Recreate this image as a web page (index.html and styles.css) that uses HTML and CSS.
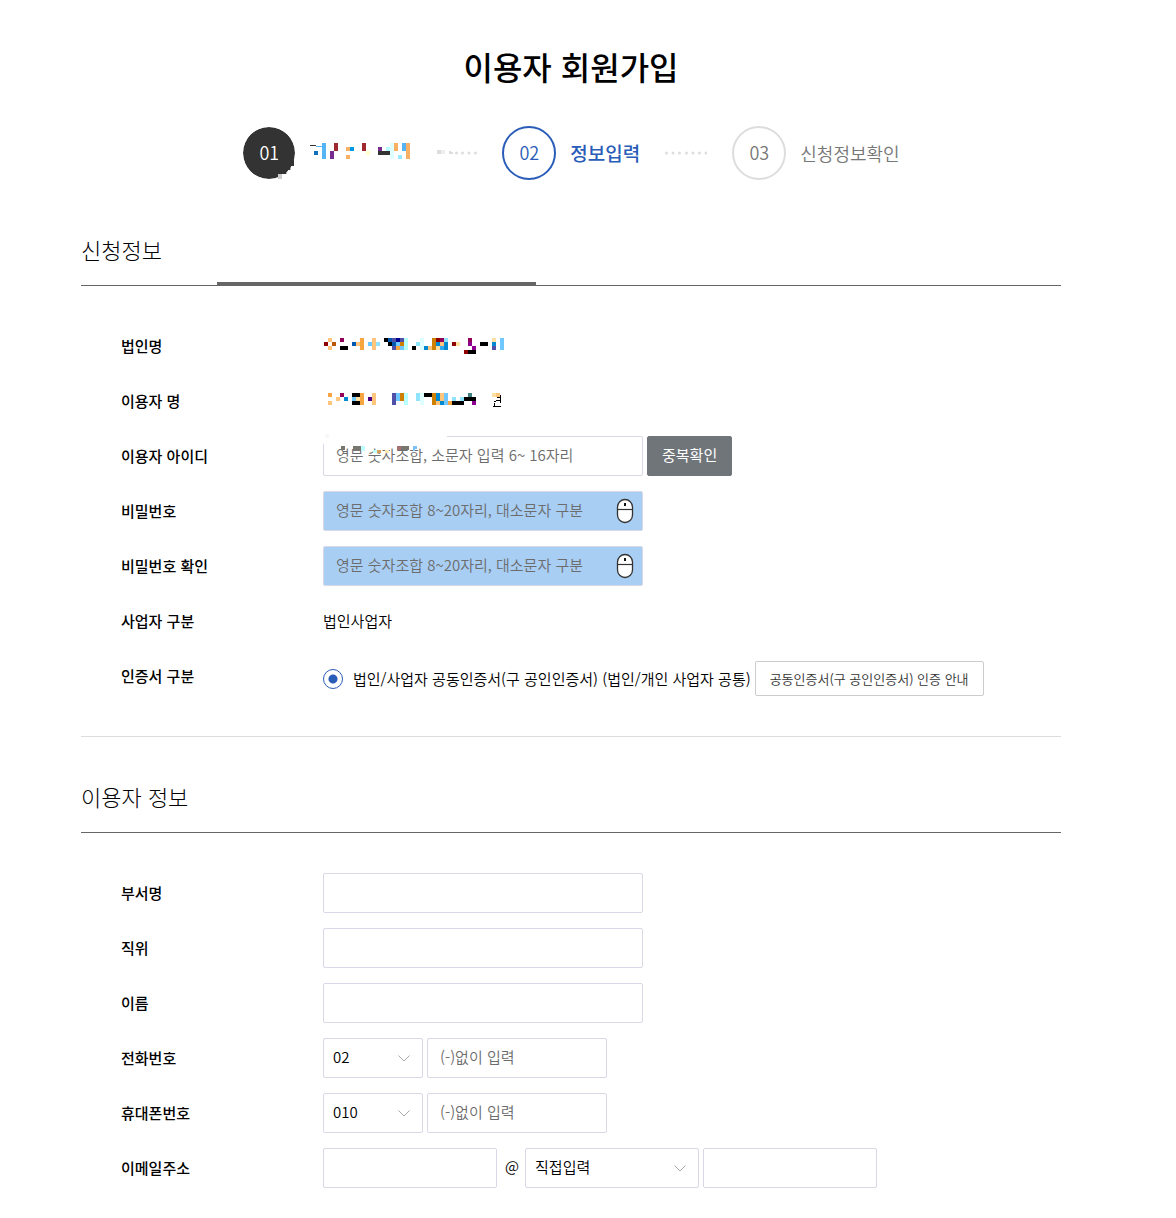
FILE: index.html
```html
<!DOCTYPE html>
<html lang="ko">
<head>
    <meta charset="UTF-8">
    <title>이용자 회원가입</title>
    <link rel="stylesheet" href="styles.css">
</head>
<body>
    <div class="wrap">
        <h1>이용자 회원가입</h1>
        <ol class="steps">
            <li class="step done">
                <span class="num">01</span>
                <!-- 가려진 단계명 -->
                <svg class="mask" width="100" height="20" viewBox="-1 0 25 5" shape-rendering="crispEdges" aria-hidden="true">
                    <path stroke="#333" d="M16 2.5h3"/>
                    <path stroke="#333" stroke-width=".25" d="M-1 .6h1.5"/>
                    <path stroke="#54b4f4" d="M2.5 0v4M22.5 0v2"/>
                    <path stroke="#54b4f4" stroke-width=".25" d="M.5 .8h1.5"/>
                    <path stroke="#a02830" d="M5.5 0v2M12.5 0v2"/>
                    <path stroke="#782c90" d="M4.5 2v2M16 1.5h1"/>
                    <path stroke="#f8b064" d="M20.5 0v2M23.5 0v4M8 1.5h1M8 3.5h1"/>
                    <path stroke="#0098e0" d="M9 1.5h1"/>
                    <path stroke="#1070b8" d="M0 2.5h1"/>
                    <path stroke="#b8ffff" d="M18 1.5h1"/>
                    <path stroke="#e0ffff" d="M19.5 0v4"/>
                    <path stroke="#98e8ff" d="M21 3.5h1"/>
                    <path stroke="#ffffc8" d="M13 2.5h1"/>
                </svg>
            </li>
            <li class="dots" aria-hidden="true">
                <svg width="42" height="8" viewBox="0 0 42 8">
                    <path fill="#ddd" d="M2 1h4v4H2z"/>
                    <path fill="#eee" d="M6 1h4v4H6z"/>
                    <path fill="#ddd" d="M14 2h2v1h2v2h-4z"/>
                    <g fill="#ddd"><circle cx="21.500" cy="4" r="1.500"/><circle cx="27.500" cy="4" r="1.500"/><circle cx="34" cy="4" r="1.500"/><circle cx="40.500" cy="4" r="1.500"/></g>
                </svg>
            </li>
            <li class="step on">
                <span class="num">02</span>
                <strong>정보입력</strong>
            </li>
            <li class="dots" aria-hidden="true">
                <svg width="42" height="8" viewBox="0 0 42 8">
                    <g fill="#ddd"><circle cx="1.500" cy="4" r="1.500"/><circle cx="8" cy="4" r="1.500"/><circle cx="14.500" cy="4" r="1.500"/><circle cx="21.500" cy="4" r="1.500"/><circle cx="28" cy="4" r="1.500"/><circle cx="34.500" cy="4" r="1.500"/><circle cx="41" cy="4" r="1.500"/></g>
                </svg>
            </li>
            <li class="step">
                <span class="num">03</span>
                <span>신청정보확인</span>
            </li>
        </ol>

        <form>
            <section>
                <h2 class="marked">신청정보</h2>
                <div class="rows">
                    <div class="row">
                        <span class="label">법인명</span>
                        <div class="field">
                            <svg class="mask" width="184" height="16" viewBox="0 0 46 4" shape-rendering="crispEdges" aria-hidden="true">
                                <path stroke="#000" d="M4 2.5h2M15 .5h1M16 1.5h1M22 2.5h1M36 3.5h2M39 1.5h2"/>
                                <path stroke="#900000" d="M0 1.5h1M28 .5h1M32 1.5h1M35 3.5h1"/>
                                <path stroke="#900058" d="M4 .5h1M29 .5h1M36 .5h1"/>
                                <path stroke="#900090" d="M36 1.5h1M37 2.5h1"/>
                                <path stroke="#b85808" d="M2 1.5h1"/>
                                <path stroke="#ffc57c" d="M1 .5h1M1 2.5h1M8 1.5h1M12.500 0v3M29 1.5h1M26 2.5h1"/>
                                <path stroke="#f7a540" d="M9.500 0v3M18 2.5h1"/>
                                <path stroke="#ffe0a0" d="M42 .5h1M33 1.5h1M28 2.5h1"/>
                                <path stroke="#d08000" d="M27.500 0v3M19 1.5h1"/>
                                <path stroke="#0058b0" d="M7 1.5h1M16 .5h1M17 1.5h1"/>
                                <path stroke="#000090" d="M18 .5h1"/>
                                <path stroke="#5050a8" d="M17 .5h1M19 .5h1M17 2.5h1M42 2.5h1"/>
                                <path stroke="#0088d0" d="M28 1.5h1M30 1.5h1M25 2.5h1M30 2.5h1M42 1.5h1"/>
                                <path stroke="#30a8f0" d="M29 2.5h1"/>
                                <path stroke="#70c8ff" d="M11 1.5h1M18 1.5h1M19 2.5h1M44.500 0v3"/>
                                <path stroke="#90e4ff" d="M13 1.5h1M23 1.5h1M30 .5h1"/>
                                <path stroke="#b8ffff" d="M20.500 0v3"/>
                                <path stroke="#e0ffff" d="M24.500 0v3"/>
                            </svg>
                        </div>
                    </div>
                    <div class="row">
                        <span class="label">이용자 명</span>
                        <div class="field">
                            <svg class="mask" width="184" height="16" viewBox="0 0 46 4" shape-rendering="crispEdges" aria-hidden="true">
                                <path stroke="#000" d="M7 .5h2M7 2.5h2M25 .5h2M35 1.5h3M32 2.5h3"/>
                                <path stroke="#900058" d="M4 .5h1"/>
                                <path stroke="#900090" d="M37 2.5h1"/>
                                <path stroke="#500080" d="M11 1.5h1"/>
                                <path stroke="#408080" d="M36 .5h1"/>
                                <path stroke="#ffc57c" d="M1 2.5h1M3 1.5h1M12.500 0v3M29.500 0v2M28 2.5h1M43 .5h1"/>
                                <path stroke="#f7a540" d="M1 .5h1M9.500 0v3M31 2.5h1"/>
                                <path stroke="#ffe0a0" d="M8 1.5h1M42 .5h1"/>
                                <path stroke="#d08000" d="M19.500 0v2M27.500 0v3"/>
                                <path stroke="#5050a8" d="M17.500 0v3"/>
                                <path stroke="#0088d0" d="M5 1.5h1M28.500 0v2M29 2.5h1"/>
                                <path stroke="#70c8ff" d="M7 1.5h1M18.500 0v2M30.500 0v3"/>
                                <path stroke="#90e4ff" d="M23 .5h1M23 1.5h1M32 1.5h1M34 1.5h1"/>
                                <path stroke="#b8ffff" d="M20.500 0v3"/>
                                <path stroke="#e0ffff" d="M24.500 0v3"/>
                                <!-- 가려지고 남은 조각 -->
                                <path stroke="#000" stroke-width=".25" d="M42.250 3.400h2M44.100 .5v2M43.250 1h.75M43 1.800h1M42.500 2.200h.5M42.700 2.600v.8"/>
                            </svg>
                        </div>
                    </div>
                    <div class="row">
                        <label class="label" for="userId">이용자 아이디</label>
                        <div class="field">
                            <div class="control">
                                <input class="text" type="text" id="userId" placeholder="영문 숫자조합, 소문자 입력 6~ 16자리">
                                <svg class="cover" width="124" height="20" viewBox="0 0 124 20" shape-rendering="crispEdges" aria-hidden="true">
                                    <path fill="#fff" d="M0 0h124v14H2V10H0z"/>
                                    <path fill="#f8f8f8" d="M2 0h4v4H2z"/>
                                    <path fill="#777770" d="M18 12h4v4h-4zM30 12h8v5h-8zM78 12h8v4h-8z"/>
                                    <path fill="#c0ffff" d="M38 12h4v5h-4zM50 16h4v3h-4z"/>
                                    <path fill="#d8a060" d="M54 16h4v3h-4z"/>
                                    <path fill="#fce8b0" d="M62 16h4v3h-4z"/>
                                    <path fill="#a87070" d="M74 12h4v4h-4z"/>
                                    <path fill="#80c0f8" d="M90 12h4v3h-2v2h-2z"/>
                                </svg>
                            </div>
                            <button class="btn" type="button">중복확인</button>
                        </div>
                    </div>
                    <div class="row">
                        <label class="label" for="pw">비밀번호</label>
                        <div class="field">
                            <div class="control">
                                <input class="text secure" type="password" id="pw" placeholder="영문 숫자조합 8~20자리, 대소문자 구분">
                                <svg class="mouse" width="18" height="26" viewBox="0 0 18 26" aria-hidden="true">
                                    <rect x="1.500" y="1.500" width="15" height="23" rx="7.500" fill="#fff" stroke="#333" stroke-width="1.300"/>
                                    <path stroke="#333" stroke-width="1.200" d="M1.500 11.500h15"/>
                                    <path stroke="#111" stroke-width="2" d="M9 5v3"/>
                                </svg>
                            </div>
                        </div>
                    </div>
                    <div class="row">
                        <label class="label" for="pw2">비밀번호 확인</label>
                        <div class="field">
                            <div class="control">
                                <input class="text secure" type="password" id="pw2" placeholder="영문 숫자조합 8~20자리, 대소문자 구분">
                                <svg class="mouse" width="18" height="26" viewBox="0 0 18 26" aria-hidden="true">
                                    <rect x="1.500" y="1.500" width="15" height="23" rx="7.500" fill="#fff" stroke="#333" stroke-width="1.300"/>
                                    <path stroke="#333" stroke-width="1.200" d="M1.500 11.500h15"/>
                                    <path stroke="#111" stroke-width="2" d="M9 5v3"/>
                                </svg>
                            </div>
                        </div>
                    </div>
                    <div class="row">
                        <span class="label">사업자 구분</span>
                        <div class="field">법인사업자</div>
                    </div>
                    <div class="row">
                        <span class="label">인증서 구분</span>
                        <div class="field cert">
                            <input class="radio" type="radio" name="cert" id="cert1" checked>
                            <label for="cert1">법인/사업자 공동인증서(구 공인인증서) (법인/개인 사업자 공통)</label>
                            <button class="btn line" type="button">공동인증서(구 공인인증서) 인증 안내</button>
                        </div>
                    </div>
                </div>
            </section>

            <section>
                <h2>이용자 정보</h2>
                <div class="rows">
                    <div class="row">
                        <label class="label" for="dept">부서명</label>
                        <div class="field"><input class="text" type="text" id="dept"></div>
                    </div>
                    <div class="row">
                        <label class="label" for="position">직위</label>
                        <div class="field"><input class="text" type="text" id="position"></div>
                    </div>
                    <div class="row">
                        <label class="label" for="name">이름</label>
                        <div class="field"><input class="text" type="text" id="name"></div>
                    </div>
                    <div class="row">
                        <label class="label" for="tel">전화번호</label>
                        <div class="field">
                            <div class="control">
                                <select class="select" aria-label="지역번호"><option>02</option></select>
                                <svg class="arrow" width="12" height="7" viewBox="0 0 12 7" aria-hidden="true"><path fill="none" stroke="#aaa" d="M.5 .5L6 6L11.500 .5"/></svg>
                            </div>
                            <input class="text tel" type="text" id="tel" placeholder="(-)없이 입력">
                        </div>
                    </div>
                    <div class="row">
                        <label class="label" for="hp">휴대폰번호</label>
                        <div class="field">
                            <div class="control">
                                <select class="select" aria-label="휴대폰 앞자리"><option>010</option></select>
                                <svg class="arrow" width="12" height="7" viewBox="0 0 12 7" aria-hidden="true"><path fill="none" stroke="#aaa" d="M.5 .5L6 6L11.500 .5"/></svg>
                            </div>
                            <input class="text tel" type="text" id="hp" placeholder="(-)없이 입력">
                        </div>
                    </div>
                    <div class="row">
                        <label class="label" for="email">이메일주소</label>
                        <div class="field">
                            <input class="text mail" type="text" id="email">
                            <span class="at">@</span>
                            <div class="control">
                                <select class="select mail" aria-label="이메일 도메인"><option>직접입력</option></select>
                                <svg class="arrow" width="12" height="7" viewBox="0 0 12 7" aria-hidden="true"><path fill="none" stroke="#aaa" d="M.5 .5L6 6L11.500 .5"/></svg>
                            </div>
                            <input class="text mail" type="text" aria-label="도메인 직접입력">
                        </div>
                    </div>
                </div>
            </section>
        </form>
    </div>
</body>
</html>
```
FILE: styles.css
```css
*{ margin: 0; padding: 0; box-sizing: border-box; }
body{ padding: 0 34px 30px 0; background: #fff; color: #000; font: 350 15px/20px "Noto Sans CJK KR", sans-serif; }
input,select,button{ font: inherit; color: inherit; }
svg{ display: block; flex: none; }
.mask{ fill: none; stroke-width: 1; }
.field .mask{ margin-left: 1px; }

.wrap{ max-width: 980px; margin: 0 auto; }
h1{ padding-top: 42px; font-size: 32px; line-height: 48px; font-weight: 500; text-align: center; }

/* 단계 */
.steps{ display: flex; justify-content: center; align-items: center; gap: 25px; margin-top: 36px; list-style: none; }
.step{ display: flex; align-items: center; gap: 14px; color: #777; font-size: 18px; white-space: nowrap; }
.num{ position: relative; width: 54px; height: 54px; border: 2px solid #ddd; border-radius: 50%; line-height: 48px; text-align: center; }
.on{ color: #2a5db8; font-size: 19px; }
.on strong{ font-weight: 500; }
.on .num{ border-color: #2a5db8; font-size: 18px; }
.done .num{ border: 1px solid #fff; background: #333; background-clip: padding-box; color: #fff; line-height: 50px; }
.done .num::before{ content: ""; position: absolute; left: 35px; top: 31px; width: 16px; height: 17px; background: #333; clip-path: polygon(0 0, 16px 0, 16px 8px, 12px 8px, 12px 12px, 8px 12px, 8px 16px, 0 16px); }
.done .num::after{ content: ""; position: absolute; left: 35px; top: 47px; width: 8px; height: 5px; background: linear-gradient(90deg, #ccc 4px, #fff 4px); }

/* 섹션 */
h2{ position: relative; padding: 54px 0 20px; border-bottom: 1px solid #666; font-size: 22px; line-height: 31px; font-weight: 300; }
.marked::after{ content: ""; position: absolute; left: 136px; bottom: -1px; width: 319px; height: 4px; background: #666; }
section + section h2{ padding-top: 44px; }
.rows{ display: grid; gap: 15px; padding: 40px 0 40px 40px; }
section:first-child .rows{ border-bottom: 1px solid #ddd; }
.row{ display: grid; grid-template-columns: 202px 1fr; align-items: center; min-height: 40px; }
.label{ font-weight: 500; }
.field{ display: flex; align-items: center; gap: 4px; }
.control{ position: relative; }

/* 입력 */
.text{ display: block; width: 320px; height: 40px; padding: 0 12px 3px; border: 1px solid #d8d8e6; border-radius: 2px; background: #fff; }
.text::placeholder{ color: #6c6c6c; opacity: 1; }
.secure{ background: #a8cef4; }
.tel{ width: 180px; }
.select{ display: block; width: 100px; height: 40px; padding: 0 30px 2px 9px; border: 1px solid #d8d8e6; border-radius: 2px; background: #fff; appearance: none; }
.mail{ width: 174px; }
.at{ padding: 0 2px 4px 4px; }
.btn{ height: 40px; padding: 0 14px 2px; border: 1px solid #70757a; border-radius: 2px; background: #70757a; color: #fff; font-weight: 400; white-space: nowrap; }
.line{ height: 35px; padding-bottom: 0; border-color: #ccc; background: #fff; color: #333; font-size: 13px; font-weight: 350; }
.cert{ align-self: end; }
.radio{ width: 20px; height: 20px; margin-right: 6px; border: 1px solid #2a5db8; border-radius: 50%; appearance: none; }
.radio:checked{ background: radial-gradient(#2a5db8 4px, #fff 5px); }

/* 입력칸 위에 겹치는 요소 */
.cover{ position: absolute; left: 0; top: -2px; }
.mouse{ position: absolute; right: 9px; top: 7px; }
.arrow{ position: absolute; right: 13px; top: 17px; }
```
